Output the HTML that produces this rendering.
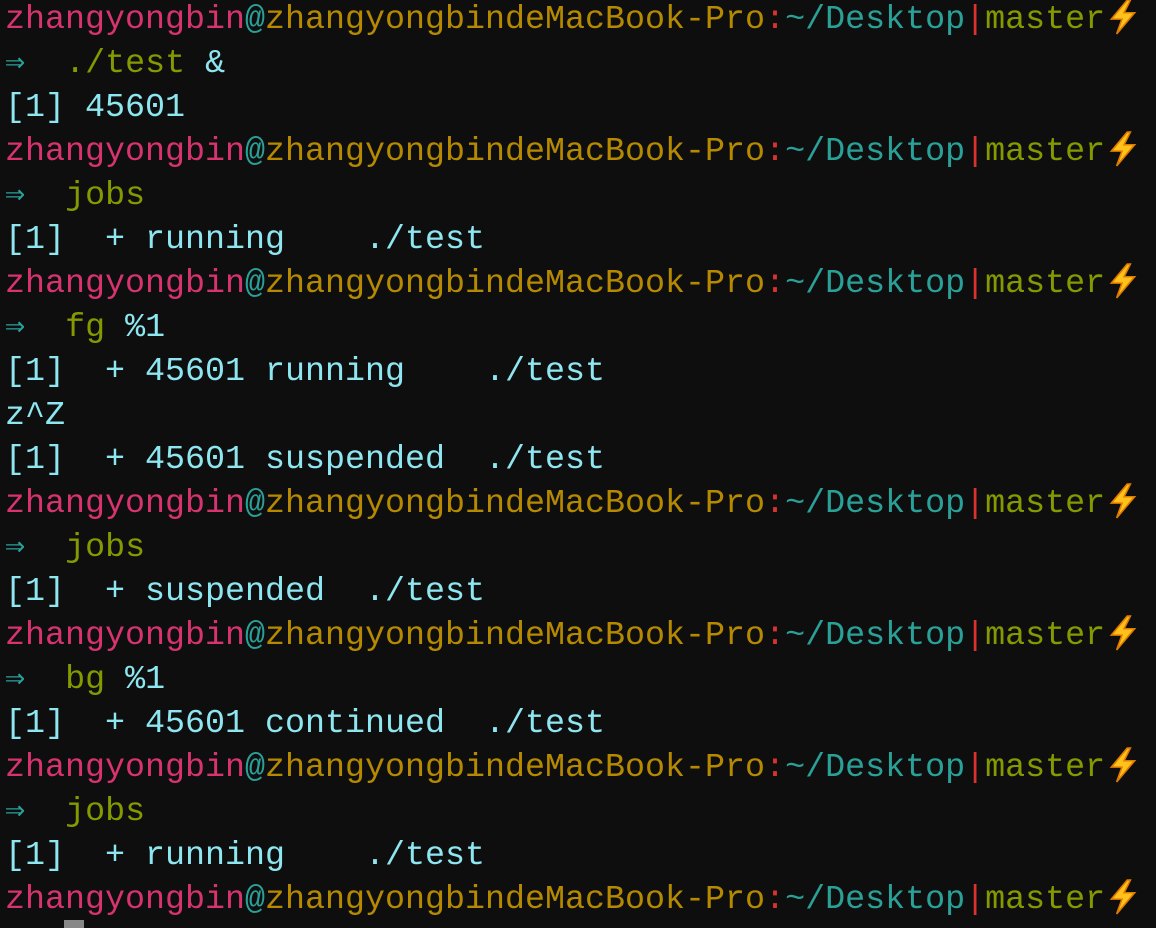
<!DOCTYPE html>
<html><head><meta charset="utf-8"><style>
html,body{margin:0;padding:0;background:#0e0e0e;width:1156px;height:928px;overflow:hidden}
pre{margin:0;position:absolute;left:5px;top:-2px;font-family:"Liberation Mono","DejaVu Sans Mono",monospace;font-size:33.33px;line-height:44px;color:#8ee6f0;white-space:pre}
.u{color:#d6336f}.a{color:#2aa198}.h{color:#b58900}.r{color:#dc322f}.m{color:#859900}.c{color:#859900}
.z{display:inline-block;width:32px;height:36px;vertical-align:-7px;margin-left:2px}
.cur{position:absolute;left:64px;top:920px;width:20px;height:8px;background:#888}
</style></head><body>
<pre><span class="u">zhangyongbin</span><span class="a">@</span><span class="h">zhangyongbindeMacBook-Pro</span><span class="r">:</span><span class="a">~/Desktop</span><span class="r">|</span><span class="m">master</span><svg class="z" viewBox="0 0 30 34"><polygon points="19,1 4,19 14,19 9,33 26,13 16,13 22,1" fill="#ffc21a" stroke="#e07a00" stroke-width="1.5"/></svg>
<span class="a">⇒</span>  <span class="c">./test</span> &amp;
[1] 45601
<span class="u">zhangyongbin</span><span class="a">@</span><span class="h">zhangyongbindeMacBook-Pro</span><span class="r">:</span><span class="a">~/Desktop</span><span class="r">|</span><span class="m">master</span><svg class="z" viewBox="0 0 30 34"><polygon points="19,1 4,19 14,19 9,33 26,13 16,13 22,1" fill="#ffc21a" stroke="#e07a00" stroke-width="1.5"/></svg>
<span class="a">⇒</span>  <span class="c">jobs</span>
[1]  + running    ./test
<span class="u">zhangyongbin</span><span class="a">@</span><span class="h">zhangyongbindeMacBook-Pro</span><span class="r">:</span><span class="a">~/Desktop</span><span class="r">|</span><span class="m">master</span><svg class="z" viewBox="0 0 30 34"><polygon points="19,1 4,19 14,19 9,33 26,13 16,13 22,1" fill="#ffc21a" stroke="#e07a00" stroke-width="1.5"/></svg>
<span class="a">⇒</span>  <span class="c">fg</span> %1
[1]  + 45601 running    ./test
z^Z
[1]  + 45601 suspended  ./test
<span class="u">zhangyongbin</span><span class="a">@</span><span class="h">zhangyongbindeMacBook-Pro</span><span class="r">:</span><span class="a">~/Desktop</span><span class="r">|</span><span class="m">master</span><svg class="z" viewBox="0 0 30 34"><polygon points="19,1 4,19 14,19 9,33 26,13 16,13 22,1" fill="#ffc21a" stroke="#e07a00" stroke-width="1.5"/></svg>
<span class="a">⇒</span>  <span class="c">jobs</span>
[1]  + suspended  ./test
<span class="u">zhangyongbin</span><span class="a">@</span><span class="h">zhangyongbindeMacBook-Pro</span><span class="r">:</span><span class="a">~/Desktop</span><span class="r">|</span><span class="m">master</span><svg class="z" viewBox="0 0 30 34"><polygon points="19,1 4,19 14,19 9,33 26,13 16,13 22,1" fill="#ffc21a" stroke="#e07a00" stroke-width="1.5"/></svg>
<span class="a">⇒</span>  <span class="c">bg</span> %1
[1]  + 45601 continued  ./test
<span class="u">zhangyongbin</span><span class="a">@</span><span class="h">zhangyongbindeMacBook-Pro</span><span class="r">:</span><span class="a">~/Desktop</span><span class="r">|</span><span class="m">master</span><svg class="z" viewBox="0 0 30 34"><polygon points="19,1 4,19 14,19 9,33 26,13 16,13 22,1" fill="#ffc21a" stroke="#e07a00" stroke-width="1.5"/></svg>
<span class="a">⇒</span>  <span class="c">jobs</span>
[1]  + running    ./test
<span class="u">zhangyongbin</span><span class="a">@</span><span class="h">zhangyongbindeMacBook-Pro</span><span class="r">:</span><span class="a">~/Desktop</span><span class="r">|</span><span class="m">master</span><svg class="z" viewBox="0 0 30 34"><polygon points="19,1 4,19 14,19 9,33 26,13 16,13 22,1" fill="#ffc21a" stroke="#e07a00" stroke-width="1.5"/></svg></pre>
<div class="cur"></div>
</body></html>
